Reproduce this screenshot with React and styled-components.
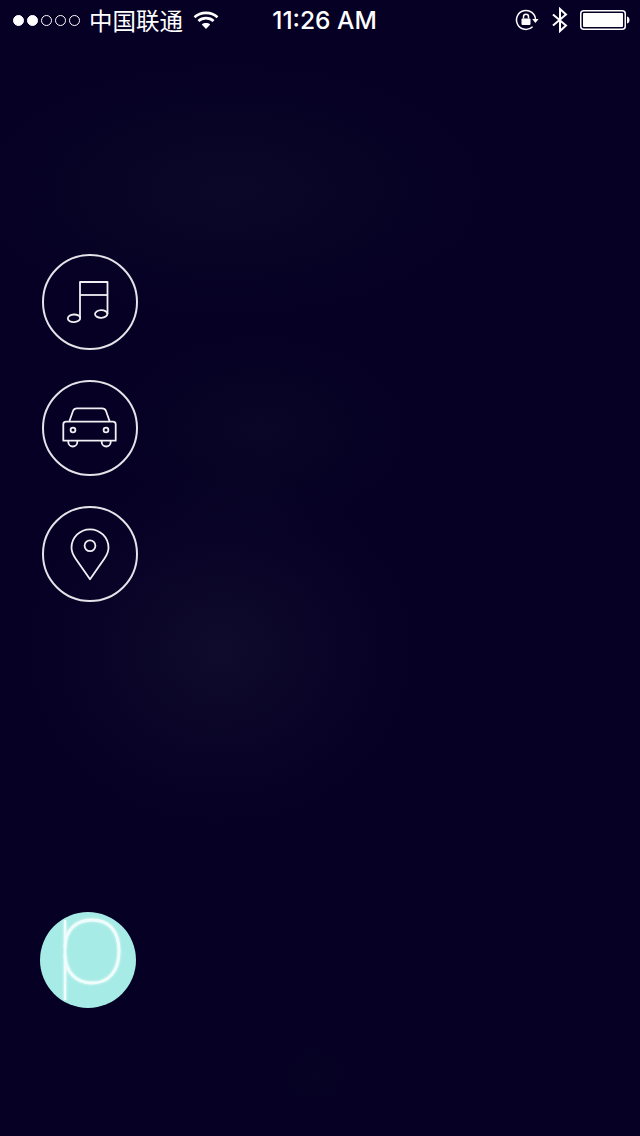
import React from "react";
import styled, { createGlobalStyle } from "styled-components";

const Global = createGlobalStyle`
  html, body { margin: 0; padding: 0; background: #050024; }
  #root { width: 640px; height: 1136px; }
`;

const Screen = styled.div`
  width: 640px;
  height: 1136px;
  overflow: hidden;
  display: flex;
  flex-direction: column;
  background:
    radial-gradient(ellipse 200px 180px at 220px 650px, rgba(28,24,54,0.46), rgba(28,24,54,0) 100%),
    radial-gradient(ellipse 280px 140px at 230px 190px, rgba(22,20,46,0.36), rgba(22,20,46,0) 100%),
    radial-gradient(ellipse 170px 110px at 260px 430px, rgba(20,18,44,0.32), rgba(20,18,44,0) 100%),
    radial-gradient(ellipse 50px 45px at 315px 1075px, rgba(16,14,38,0.22), rgba(16,14,38,0) 100%),
    #050024;
  color: #fff;
  font-family: "Inter", "Noto Sans CJK SC", sans-serif;
`;

const StatusBar = styled.header`
  height: 40px;
  flex: none;
  display: grid;
  grid-template-columns: 1fr auto 1fr;
  align-items: center;
  padding: 0 10px 0 13px;
`;

const StatusLeft = styled.div`
  display: flex;
  align-items: center;
`;

const StatusRight = styled.div`
  display: flex;
  align-items: center;
  justify-content: flex-end;
`;

const Signal = styled.div`
  display: flex;
  gap: 3px;
  margin-right: 9px;
`;

const Dot = styled.span`
  width: 11px;
  height: 11px;
  box-sizing: border-box;
  border-radius: 50%;
  border: 1px solid #fff;
  background: ${(p) => (p.$on ? "#fff" : "transparent")};
`;

const Carrier = styled.span`
  font-family: "Noto Sans CJK SC", sans-serif;
  font-weight: 400;
  font-size: 23.5px;
  line-height: 40px;
  margin-right: 10px;
`;

const Time = styled.span`
  font-family: "Inter", sans-serif;
  font-weight: 500;
  font-size: 24.5px;
  line-height: 40px;
  white-space: nowrap;
  margin-left: 6px;
`;

const Battery = styled.svg`
  display: block;
  margin-left: 11px;
`;

const Bluetooth = styled.svg`
  display: block;
  margin-left: 12px;
`;

const Body = styled.main`
  flex: 1;
  display: flex;
  flex-direction: column;
  align-items: flex-start;
  padding: 214px 0 0 40px;
`;

const Menu = styled.nav`
  display: flex;
  flex-direction: column;
  gap: 30px;
  margin-left: 2px;
`;

const RoundButton = styled.div`
  width: 96px;
  height: 96px;
  box-sizing: border-box;
  border-radius: 50%;
  border: 2px solid #e4e3e9;
  display: flex;
  align-items: center;
  justify-content: center;
`;

const Glyph = styled.svg`
  display: block;
  width: 96px;
  height: 96px;
  flex: none;
  fill: none;
  stroke: #f0eff3;
  stroke-width: 1.8;
  stroke-linejoin: round;
`;

const Fab = styled.div`
  width: 96px;
  height: 96px;
  margin-top: 310px;
  border-radius: 50%;
  background: #a6ebe6;
  overflow: hidden;
`;

const FabGlyph = styled.svg`
  display: block;
  fill: none;
  stroke: #eefdfb;
  stroke-width: 3;
  filter: drop-shadow(0 0 1.5px rgba(255,255,255,0.7));
`;

export default function App() {
  return (
    <Screen>
      <Global />
      <StatusBar>
        <StatusLeft>
          <Signal>
            <Dot $on /><Dot $on /><Dot /><Dot /><Dot />
          </Signal>
          <Carrier>中国联通</Carrier>
          <svg width="26" height="20" viewBox="0 0 26 20" fill="none" stroke="#fff" strokeWidth="2.6">
            <path d="M1.5 7.2 C7.6 1.4 18.4 1.4 24.5 7.2" />
            <path d="M5.4 11 C9.6 7.2 16.4 7.2 20.6 11" />
            <path d="M13 19 L8.8 14.4 C11 12.6 15 12.6 17.2 14.4 Z" fill="#fff" stroke="none" />
          </svg>
        </StatusLeft>
        <Time>11:26 AM</Time>
        <StatusRight>
          <svg width="24" height="22" viewBox="0 0 24 22" fill="none" stroke="#fff" strokeWidth="1.5">
            <path d="M20.5 11 A9.5 9.5 0 1 0 17.6 17.8" />
            <path d="M17.2 10 L23.6 10 L20.4 14 Z" fill="#fff" stroke="none" />
            <rect x="6.5" y="9.5" width="9" height="6.5" rx="1" fill="#fff" stroke="none" />
            <path d="M8.5 9.5 V7.8 a2.5 2.5 0 0 1 5 0 V9.5" />
          </svg>
          <Bluetooth width="18" height="26" viewBox="0 0 18 26" fill="none" stroke="#fff" strokeWidth="2">
            <path d="M2 7.5 L15 18.5 L9 24 V2 L15 7.5 L2 18.5" />
          </Bluetooth>
          <Battery width="50" height="20" viewBox="0 0 50 20">
            <rect x="0.75" y="0.75" width="44.5" height="18.5" rx="3" fill="none" stroke="#fff" strokeWidth="1.5" />
            <rect x="3" y="3" width="40" height="14" rx="1" fill="#fff" />
            <path d="M47 6.5 C49 7 49.5 8.5 49.5 10 C49.5 11.5 49 13 47 13.5 Z" fill="#fff" />
          </Battery>
        </StatusRight>
      </StatusBar>
      <Body>
        <Menu>
          <RoundButton>
            <Glyph viewBox="0 0 96 96">
              <path d="M38 64 V28 H65.5 V60" />
              <path d="M38 41 H65.5" />
              <ellipse cx="32" cy="64.3" rx="6.2" ry="3.8" transform="rotate(-3 32 64.3)" />
              <ellipse cx="59.2" cy="60" rx="6.2" ry="3.8" transform="rotate(-3 59.2 60)" />
            </Glyph>
          </RoundButton>
          <RoundButton>
            <Glyph viewBox="0 0 96 96">
              <path d="M27.3 41.5 L31 31 Q32 28.3 35 28.3 H60 Q63 28.3 64 31 L67.7 41.5" />
              <path d="M21.3 60.7 V44.5 Q21.3 41.7 24 41.7 H71 Q73.7 41.7 73.7 44.5 V60.7 Z" />
              <path d="M26.3 60.7 V62 a4.5 4.5 0 0 0 9 0 V60.7" />
              <path d="M59.7 60.7 V62 a4.5 4.5 0 0 0 9 0 V60.7" />
              <circle cx="31" cy="50" r="2.4" />
              <circle cx="64" cy="50" r="2.4" />
            </Glyph>
          </RoundButton>
          <RoundButton>
            <Glyph viewBox="0 0 96 96">
              <path d="M48 73.3 L33.5 52.5 C31 48.8 29.5 45.5 29.5 41.8 C29.5 31.6 37.8 23.3 48 23.3 C58.2 23.3 66.5 31.6 66.5 41.8 C66.5 45.5 65 48.8 62.5 52.5 Z" />
              <circle cx="48" cy="39.7" r="5.4" />
            </Glyph>
          </RoundButton>
        </Menu>
        <Fab>
          <FabGlyph width="96" height="96" viewBox="0 0 96 96">
            <path d="M25 8 V88" strokeWidth="2.4" />
            <path d="M25 36 C25 18 36 8 52 8 C68 8 79 18 79 39 C79 60 68 71 52 71 C36 71 25 60 25 42" />
          </FabGlyph>
        </Fab>
      </Body>
    </Screen>
  );
}
